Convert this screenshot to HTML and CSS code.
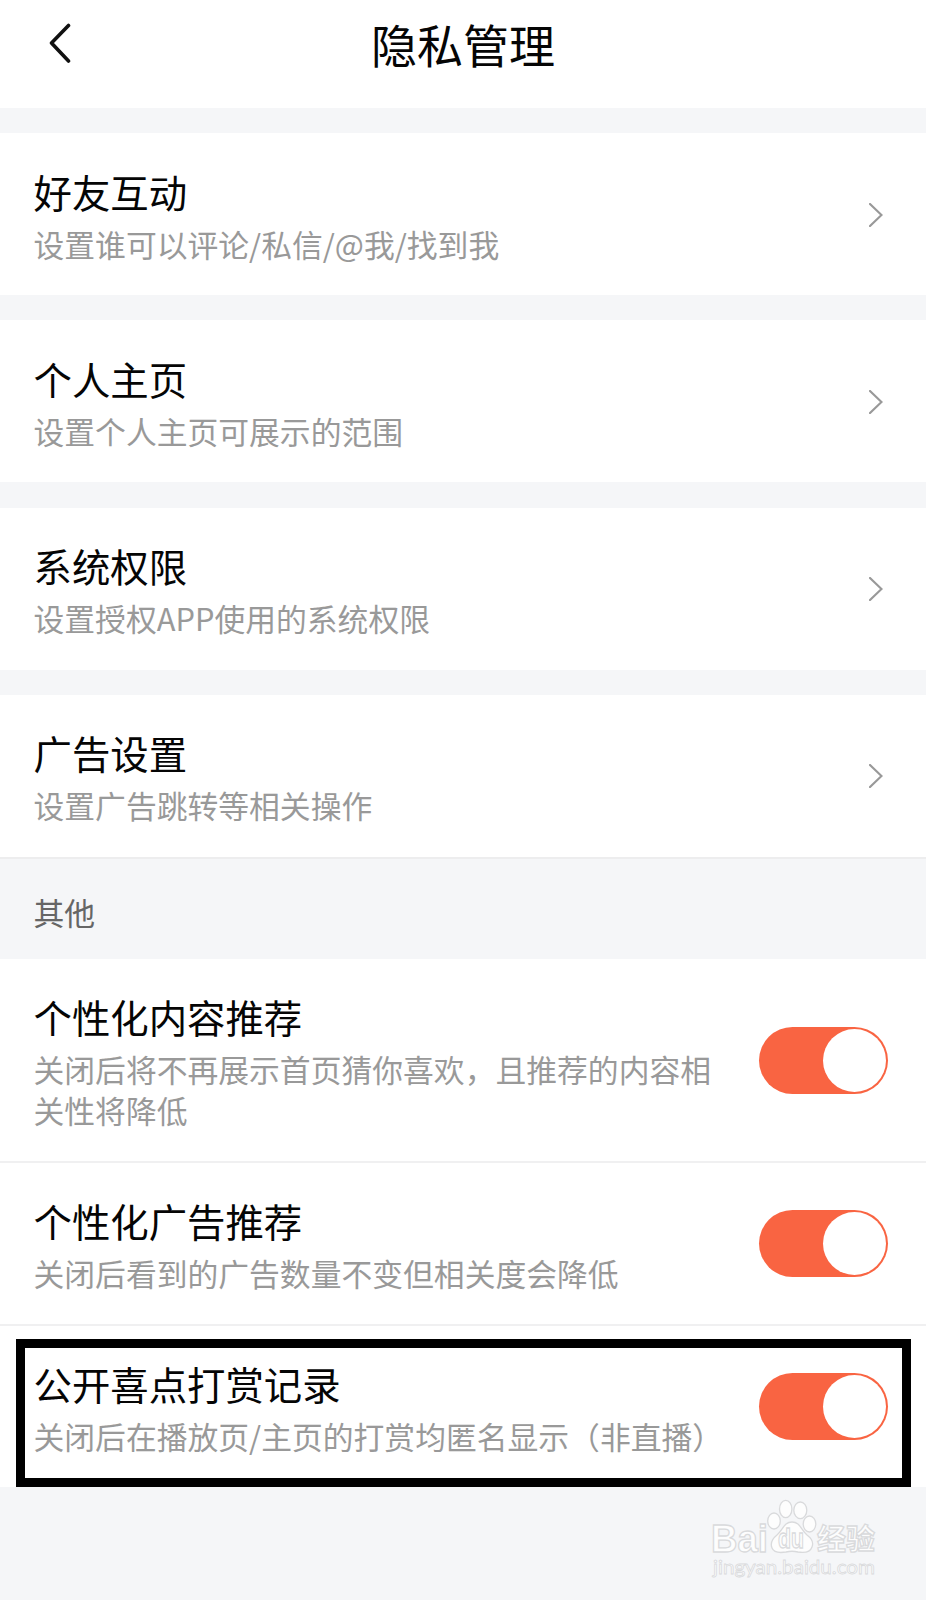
FILE: index.html
```
<!DOCTYPE html>
<html lang="zh-CN">
<head>
    <meta charset="UTF-8">
    <meta name="viewport" content="width=device-width, initial-scale=1.0">
    <title>隐私管理</title>
    <link rel="stylesheet" href="styles.css">
</head>
<body>
    <div class="page">
        <header class="header">
            <svg class="back" viewBox="0 0 24 40">
                <path d="M20.5 2.5 L3.5 20 L20.5 38"/>
            </svg>
            <h1>隐私管理</h1>
        </header>

        <!-- 跳转项 -->
        <div class="links">
            <div class="item">
                <div class="text">
                    <h2>好友互动</h2>
                    <p>设置谁可以评论/私信/@我/找到我</p>
                </div>
                <svg class="arrow" viewBox="0 0 14 24"><path d="M1 1 L12.5 12 L1 23"/></svg>
            </div>
            <div class="item">
                <div class="text">
                    <h2>个人主页</h2>
                    <p>设置个人主页可展示的范围</p>
                </div>
                <svg class="arrow" viewBox="0 0 14 24"><path d="M1 1 L12.5 12 L1 23"/></svg>
            </div>
            <div class="item">
                <div class="text">
                    <h2>系统权限</h2>
                    <p>设置授权APP使用的系统权限</p>
                </div>
                <svg class="arrow" viewBox="0 0 14 24"><path d="M1 1 L12.5 12 L1 23"/></svg>
            </div>
            <div class="item">
                <div class="text">
                    <h2>广告设置</h2>
                    <p>设置广告跳转等相关操作</p>
                </div>
                <svg class="arrow" viewBox="0 0 14 24"><path d="M1 1 L12.5 12 L1 23"/></svg>
            </div>
        </div>

        <div class="section-title">其他</div>

        <!-- 开关项 -->
        <div class="switches">
            <div class="item">
                <div class="text">
                    <h2>个性化内容推荐</h2>
                    <p>关闭后将不再展示首页猜你喜欢，且推荐的内容相关性将降低</p>
                </div>
                <div class="switch"></div>
            </div>
            <div class="item">
                <div class="text">
                    <h2>个性化广告推荐</h2>
                    <p>关闭后看到的广告数量不变但相关度会降低</p>
                </div>
                <div class="switch"></div>
            </div>
            <div class="item marked">
                <div class="text">
                    <h2>公开喜点打赏记录</h2>
                    <p>关闭后在播放页/主页的打赏均匿名显示（非直播）</p>
                </div>
                <div class="switch"></div>
            </div>
        </div>

        <!-- 水印 -->
        <svg class="watermark" viewBox="0 0 190 100">
            <text class="wm-logo" x="11" y="57" textLength="57" lengthAdjust="spacingAndGlyphs">Bai</text>
            <ellipse cx="74" cy="26" rx="6.3" ry="8"/>
            <ellipse cx="85.7" cy="14" rx="6.2" ry="8.6"/>
            <ellipse cx="100.3" cy="15.3" rx="6.5" ry="8.3"/>
            <ellipse cx="109.5" cy="29" rx="6.3" ry="8"/>
            <path d="M92 27 C84 27 83 35 77 40 C72 44 70 48 72 53 C74 58 80 58 86 57 C90 56 94 56 98 57 C104 58 110 58 112 52 C114 47 111 43 107 40 C101 35 100 27 92 27 Z"/>
            <text class="wm-du" x="78" y="53" textLength="26" lengthAdjust="spacingAndGlyphs">du</text>
            <text class="wm-cn" x="117" y="55">经验</text>
            <text class="wm-url" x="13" y="79" textLength="162" lengthAdjust="spacingAndGlyphs">jingyan.baidu.com</text>
        </svg>
    </div>
</body>
</html>
```

FILE: styles.css
```
* {
    box-sizing: border-box;
}

body {
    margin: 0;
    background-color: #f5f6f8;
    font-family: "Noto Sans CJK SC", sans-serif;
}

.page {
    position: relative;
    height: 1600px;
    overflow: hidden;
}

h1, h2, p {
    margin: 0;
    font-weight: 400;
}

.header {
    display: grid;
    grid-template-columns: 80px 1fr 80px;
    height: 108px;
    padding-top: 10px;
    background-color: #fff;
}

.header h1 {
    font-size: 46px;
    line-height: 66px;
    text-align: center;
    color: #050505;
}

.back {
    width: 24px;
    height: 40px;
    margin: 13px 0 0 48px;
    fill: none;
    stroke: #111;
    stroke-width: 3.6;
    stroke-linecap: round;
    stroke-linejoin: round;
}

.links {
    display: flex;
    flex-direction: column;
    gap: 25.3px;
    padding-top: 25px;
    border-bottom: 2px solid #ededee;
}

.item {
    display: flex;
    align-items: center;
    justify-content: space-between;
    padding: 32px 38px 31px 33.5px;
    background-color: #fff;
}

.links .item {
    height: 162px;
    padding-right: 43px;
}

.text {
    width: 680px;
}

.text h2 {
    font-size: 38.4px;
    line-height: 50px;
    color: #050505;
}

.text p {
    margin-top: 7px;
    font-size: 30.8px;
    line-height: 41px;
    color: #999;
}

.arrow {
    width: 14px;
    height: 24px;
    fill: none;
    stroke: #999;
    stroke-width: 2.2;
    stroke-linecap: round;
}

.section-title {
    height: 100px;
    padding-left: 33.5px;
    font-size: 30.8px;
    line-height: 106px;
    color: #666;
}

.switches .item {
    border-bottom: 2px solid #f0f0f1;
}

.switches .marked {
    position: relative;
    border-bottom: none;
}

/* 黑色标注框 */
.marked::after {
    content: "";
    position: absolute;
    left: 16px;
    right: 15px;
    top: 13px;
    bottom: 0;
    border: 9px solid #000;
}

.switch {
    width: 129px;
    height: 67px;
    padding: 2px;
    border-radius: 34px;
    background-color: #f96442;
}

.switch::before {
    content: "";
    display: block;
    width: 63px;
    height: 63px;
    margin-left: auto;
    border-radius: 50%;
    background-color: #fff;
}

.watermark {
    position: absolute;
    left: 700px;
    top: 1495px;
    width: 190px;
    height: 100px;
    fill: #fdfdfd;
    stroke: #d9dadc;
    stroke-width: 1.3;
}

.wm-logo, .wm-du {
    font-family: "Liberation Sans", sans-serif;
    font-weight: 700;
    font-size: 38px;
}

.wm-du {
    font-size: 27px;
}

.wm-cn {
    font-size: 29px;
    font-weight: 700;
}

.wm-url {
    font-family: Lato, sans-serif;
    font-size: 20px;
    stroke-width: 0.8;
}
```
